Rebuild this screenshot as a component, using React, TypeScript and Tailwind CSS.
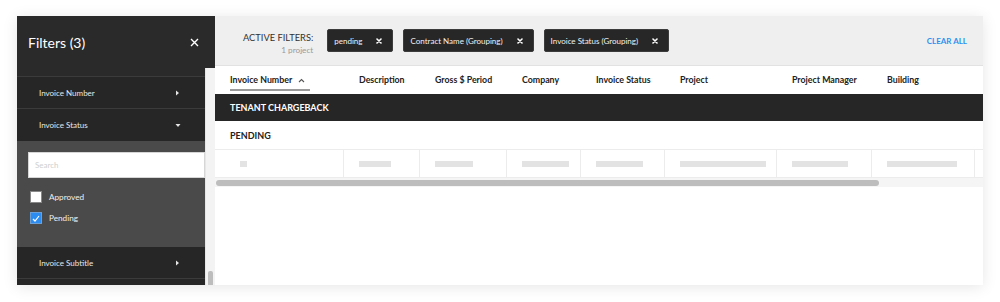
import React from "react";

const font = { fontFamily: "Lato, 'Open Sans', sans-serif" };

function Caret({ dir }: { dir: "right" | "down" }) {
  return dir === "right" ? (
    <svg width="5" height="6" viewBox="0 0 5 6"><path d="M1 0.5 L4 3 L1 5.5 Z" fill="#e5e5e5" /></svg>
  ) : (
    <svg width="6" height="5" viewBox="0 0 6 5"><path d="M0.5 1 L5.5 1 L3 4 Z" fill="#e5e5e5" /></svg>
  );
}

function Chip({ label }: { label: string }) {
  return (
    <div className="flex items-center h-[23px] bg-[#272727] rounded-[2px] border border-[#3c3c3c] pl-[6px] pr-[10px] gap-[14px]">
      <span className="text-[8px] leading-none text-[#f2f2f2] whitespace-nowrap">{label}</span>
      <svg width="6" height="6" viewBox="0 0 6 6"><path d="M1 1 L5 5 M5 1 L1 5" stroke="#fff" strokeWidth="1.6" strokeLinecap="round" /></svg>
    </div>
  );
}

const cols = [
  { name: "Invoice Number", w: 129, bar: 0 },
  { name: "Description", w: 76, bar: 32 },
  { name: "Gross $ Period", w: 87, bar: 38 },
  { name: "Company", w: 74, bar: 47 },
  { name: "Invoice Status", w: 84, bar: 47 },
  { name: "Project", w: 112, bar: 86 },
  { name: "Project Manager", w: 95, bar: 56 },
  { name: "Building", w: 103, bar: 70 },
];

export default function App() {
  return (
    <div className="w-[1000px] h-[302px] bg-white pt-[16px] pl-[17px]" style={font}>
      <div className="flex w-[966px] h-[269px] bg-white shadow-[0_2px_14px_rgba(0,0,0,0.10)]">
        {/* Sidebar */}
        <div className="w-[198px] flex flex-col">
          <div className="h-[52px] bg-[#2a2a2a] flex items-center justify-between pl-[11px] pr-[16px] shrink-0">
            <span className="text-[14px] text-white">Filters (3)</span>
            <svg width="9" height="9" viewBox="0 0 9 9"><path d="M1 1 L8 8 M8 1 L1 8" stroke="#fff" strokeWidth="1.4" /></svg>
          </div>
          <div className="flex flex-1 min-h-0">
            <div className="w-[188px] flex flex-col bg-[#262626] overflow-hidden">
              <div className="h-[9px] bg-[#2a2a2a] border-b border-[#3b3b3b] shrink-0" />
              <div className="h-[32px] shrink-0 flex items-center justify-between pl-[22px] pr-[25px] border-b border-[#3b3b3b]">
                <span className="text-[8px] text-[#e6e6e6]">Invoice Number</span>
                <Caret dir="right" />
              </div>
              <div className="h-[32px] shrink-0 flex items-center justify-between pl-[22px] pr-[24px]">
                <span className="text-[8px] text-[#e6e6e6]">Invoice Status</span>
                <Caret dir="down" />
              </div>
              <div className="h-[106px] shrink-0 bg-[#4a4a4a] pt-[11px] pl-[11px] flex flex-col">
                <div className="h-[26px] bg-white border border-[#d6d6d6] flex items-center pl-[6px] shrink-0">
                  <span className="text-[8px] text-[#cfcfcf]">Search</span>
                </div>
                <div className="flex items-center gap-[7px] mt-[13px] pl-[2px] h-[12px] shrink-0">
                  <div className="w-[12px] h-[12px] bg-white border border-[#888]" />
                  <span className="text-[8.2px] leading-none text-[#f0f0f0]">Approved</span>
                </div>
                <div className="flex items-center gap-[7px] mt-[9px] pl-[2px] h-[12px] shrink-0">
                  <div className="w-[12px] h-[12px] bg-[#2d8cf0] border border-[#6a9fd8] flex items-center justify-center">
                    <svg width="8" height="7" viewBox="0 0 8 7"><path d="M1 4 L3 6 L7 1" stroke="#fff" strokeWidth="1.2" fill="none" /></svg>
                  </div>
                  <span className="text-[8.2px] leading-none text-[#f0f0f0]">Pending</span>
                </div>
              </div>
              <div className="h-[32px] shrink-0 flex items-center justify-between pl-[22px] pr-[25px] border-b border-[#3b3b3b]">
                <span className="text-[8px] text-[#e6e6e6]">Invoice Subtitle</span>
                <Caret dir="right" />
              </div>
              <div className="flex-1 bg-[#262626]" />
            </div>
            <div className="w-[10px] bg-[#f3f3f3] border-l border-[#e6e6e6] flex flex-col justify-end items-center">
              <div className="w-[5px] h-[14px] bg-[#bdbdbd] rounded-t-[2px]" />
            </div>
          </div>
        </div>

        {/* Main */}
        <div className="flex-1 flex flex-col min-w-0">
          <div className="h-[50px] bg-[#efefef] border-b border-[#e2e2e2] flex items-center pl-[28px] pr-[16px] shrink-0">
            <div className="flex flex-col items-end leading-none pt-[6px]">
              <span className="text-[9.3px] text-[#333]">ACTIVE FILTERS:</span>
              <span className="text-[8.2px] text-[#9a9a9a] mt-[4px]">1 project</span>
            </div>
            <div className="flex items-center gap-[10px] ml-[14px]">
              <Chip label="pending" />
              <Chip label="Contract Name (Grouping)" />
              <Chip label="Invoice Status (Grouping)" />
            </div>
            <div className="flex-1" />
            <span className="text-[8px] font-bold text-[#2f8ff0]">CLEAR ALL</span>
          </div>
          <div className="h-[28px] flex shrink-0 bg-white">
            {cols.map((c, i) => (
              <div key={c.name} className="flex items-center pl-[15px] shrink-0" style={{ width: c.w }}>
                {i === 0 ? (
                  <div className="flex items-center gap-[6px] border-b-2 border-[#9a9a9a] h-[20px] mt-[2px] pr-[5px]">
                    <span className="text-[8.8px] font-bold text-[#222] whitespace-nowrap">{c.name}</span>
                    <svg width="7" height="5" viewBox="0 0 7 5"><path d="M1 4 L3.5 1.5 L6 4" stroke="#555" strokeWidth="1.1" fill="none" /></svg>
                  </div>
                ) : (
                  <span className="text-[8.8px] font-bold text-[#222] whitespace-nowrap">{c.name}</span>
                )}
              </div>
            ))}
          </div>
          <div className="h-[27px] bg-[#262626] flex items-center pl-[15px] shrink-0">
            <span className="text-[9px] font-bold text-white">TENANT CHARGEBACK</span>
          </div>
          <div className="h-[28px] bg-white flex items-center pl-[15px] pt-[2px] shrink-0">
            <span className="text-[9px] font-bold text-[#222]">PENDING</span>
          </div>
          <div className="h-[29px] flex border-y border-[#ececec] shrink-0 overflow-hidden">
            {cols.map((c, i) => (
              <div key={c.name} className="flex items-center shrink-0 pl-[15px] border-r border-[#ececec]" style={{ width: c.w }}>
                {i === 0 ? (
                  <div className="w-[7px] h-[6px] bg-[#e3e3e3] ml-[10px]" />
                ) : (
                  <div className="h-[6px] bg-[#e3e3e3]" style={{ width: c.bar }} />
                )}
              </div>
            ))}
          </div>
          <div className="h-[9px] bg-[#f5f5f5] flex items-center shrink-0">
            <div className="w-[663px] h-[6px] bg-[#bdbdbd] rounded-full ml-[1px]" />
          </div>
          <div className="flex-1 bg-white" />
        </div>
      </div>
    </div>
  );
}
